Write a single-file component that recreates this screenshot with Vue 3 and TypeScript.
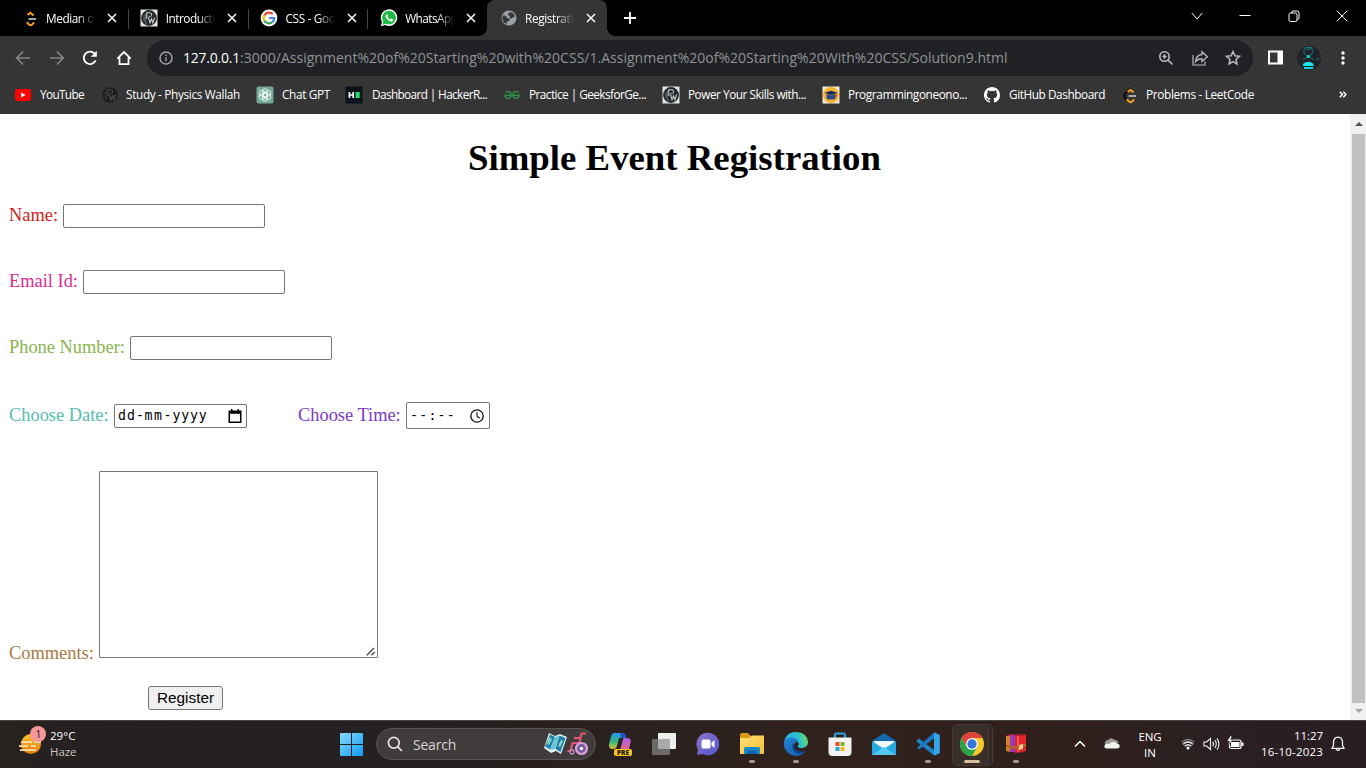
<script setup lang="ts">
import type { Directive } from 'vue'

interface Tab { title: string; width: number; icon: string; active?: boolean }
interface Bookmark { label: string; left: number; text: number; width: number; icon: string }
interface TaskItem { name: string; icon: string; state?: 'open' | 'active' }

// Sets the tracking so that a label takes up the given width.
const vFit: Directive<HTMLElement, number> = {
  mounted(el, { value }) {
    const n = (el.textContent || '').trim().length
    if (n) el.style.letterSpacing = `${(value - el.getBoundingClientRect().width) / n}px`
  },
}

const art: Record<string, string> = {
  leet: `<path d="M9.2 .6 2.900 7Q1.300 8.900 2.900 10.800L5 13" fill="none" stroke="#080808" stroke-width="2"/><path d="M5.600 5 8.300 2.800 11.600 5.600M4.800 12.300 7 14.500Q8.600 15.900 10.200 14.500L12 12.300" fill="none" stroke="#f5a11c" stroke-width="2"/><path d="M6.500 9h7.500" stroke="#b3b1ad" stroke-width="1.900"/>`,
  pw: `<rect x="-.5" y="-.5" width="17" height="17" fill="#e4e4e4"/><circle cx="8" cy="8" r="7.900" fill="#23282a"/><path d="M5.800 9V2.800h2.800q2.300.3 2 2.200-.4 1.800-3 1.700M7.500 7.500l1.500 5.300 1.600-4 1.300 4L13.600 7.500" fill="none" stroke="#c9cccd" stroke-width="1.100"/><path d="M3 5v6M4.300 3.500v9.500l2 1.200" fill="none" stroke="#7f8688" stroke-width=".8"/>`,
  pwdark: `<circle cx="8" cy="8" r="7.800" fill="#1d1e1f"/><path d="M5.800 9V2.800h2.800q2.300.3 2 2.200-.4 1.800-3 1.700M7.500 7.500l1.500 5.300 1.600-4 1.300 4L13.600 7.500" fill="none" stroke="#4a4b4c" stroke-width="1.100"/><path d="M3 5v6M4.300 3.500v9.500" stroke="#3b3c3d" stroke-width=".8"/>`,
  google: `<circle cx="8" cy="8" r="8.400" fill="#fff"/><g fill="none" stroke-width="2.200"><path d="M11.800 4.100A5.300 5.300 0 0 0 3.400 5.400" stroke="#ea4335"/><path d="M3.400 5.300a5.300 5.300 0 0 0 0 5.400" stroke="#fbbc05"/><path d="M3.400 10.600a5.300 5.300 0 0 0 8 1.500" stroke="#34a853"/><path d="M8.100 8h5.200a5.300 5.300 0 0 1-2 4.200" stroke="#4285f4"/></g>`,
  whatsapp: `<path d="M-.2 16.300 1 12A8.300 8.300 0 1 1 4.300 15z" fill="#fff"/><path d="m1.400 14.700.9-3.100A6.900 6.900 0 1 1 4.800 13.800z" fill="#1dba45"/><path d="M5.500 4.300q.7-.5 1.100.4l.5 1.300-.7 1q1 1.800 2.900 2.600l.9-1 1.900.9q.1 1.400-1.300 2-1.600.3-4.200-1.700Q4.300 7.600 4.600 6z" fill="#fff"/>`,
  globe: `<circle cx="8" cy="8" r="7.500" fill="#9aa0a6"/><path d="M2.600 5 5 6.200 6.500 8.200 8.800 9l-.6 2-2 .4-.7 2.600A7 7 0 0 1 1.500 7zM9 2l3.500 1.400L14 6.500l-2.200.7-1.300 1.600-2-.8.4-2-2-.7.8-2z" fill="#35363a"/>`,
  youtube: `<rect x="0" y="2" width="16" height="12" rx="2.600" fill="#f00"/><path d="M6.200 5.500v5L10.600 8z" fill="#fff"/>`,
  gpt: `<rect x="-.5" y="-.5" width="17" height="17" rx="2" fill="#75a99c"/><g fill="none" stroke="#e9f5f1" stroke-width=".9"><rect x="5.500" y="1.800" width="5" height="8" rx="2.500"/><rect x="5.500" y="1.800" width="5" height="8" rx="2.500" transform="rotate(60 8 8)"/><rect x="5.500" y="1.800" width="5" height="8" rx="2.500" transform="rotate(120 8 8)"/><rect x="5.500" y="1.800" width="5" height="8" rx="2.500" transform="rotate(180 8 8)"/><rect x="5.500" y="1.800" width="5" height="8" rx="2.500" transform="rotate(240 8 8)"/><rect x="5.500" y="1.800" width="5" height="8" rx="2.500" transform="rotate(300 8 8)"/></g>`,
  hacker: `<rect x="-.5" y="-.5" width="17" height="17" fill="#0b121c"/><path d="M3.400 5v6M7.200 5v6M3.400 8h4" stroke="#fff" stroke-width="1.700"/><rect x="9.500" y="5" width="4.200" height="6" fill="#1edb63"/>`,
  gfg: `<g fill="none" stroke="#2f8d46" stroke-width="1.500"><path d="M1.500 5.500Q3 4 5.200 4.600 7.300 5.600 7.100 8.200 6.700 11.300 3.900 11.500 1.400 11.200.9 8.300H16"/><path d="M14.500 5.500Q13 4 10.800 4.600 8.700 5.600 8.900 8.200 9.300 11.300 12.100 11.500 14.600 11.200 15.100 8.300"/></g>`,
  prog: `<rect x="-.5" y="-.5" width="17" height="17" fill="#f4ead8"/><circle cx="8" cy="8" r="8" fill="#f6b32f"/><path d="m1.500 5.800 6.500-2 6.500 2L8 8.200z" fill="#182a63"/><path d="M3.500 7 8 8.500 12.500 7v4.700q-4.500 1.700-9 0z" fill="#2d4688"/><path d="M13.500 6v4" stroke="#d45b2d"/>`,
  github: `<path fill="#fff" d="M8 0C3.580 0 0 3.580 0 8c0 3.540 2.290 6.530 5.470 7.590.4.070.55-.17.55-.38 0-.19-.01-.82-.01-1.490-2.010.37-2.530-.49-2.690-.94-.09-.23-.48-.94-.82-1.130-.28-.15-.68-.52-.01-.53.63-.01 1.080.58 1.230.82.72 1.210 1.870.87 2.330.66.07-.52.28-.87.51-1.070-1.780-.2-3.640-.89-3.640-3.950 0-.87.31-1.590.82-2.150-.08-.2-.36-1.020.08-2.120 0 0 .67-.21 2.200.82a7.600 7.600 0 0 1 4 0c1.530-1.040 2.200-.82 2.200-.82.44 1.100.16 1.920.08 2.120.51.56.82 1.270.82 2.150 0 3.070-1.870 3.750-3.650 3.950.29.25.54.73.54 1.480 0 1.070-.01 1.930-.01 2.200 0 .21.15.46.55.38A8 8 0 0 0 16 8c0-4.420-3.580-8-8-8"/>`,
  copilot: `<defs><linearGradient id="cpa" x1="0" y1="0" x2="0" y2="1"><stop stop-color="#2497ee"/><stop offset=".55" stop-color="#35b67c"/><stop offset="1" stop-color="#e6c22e"/></linearGradient><linearGradient id="cpb" x1="0" y1="0" x2="0" y2="1"><stop stop-color="#a65ee8"/><stop offset="1" stop-color="#f1677e"/></linearGradient></defs><path d="M6 1h8q2.500.2 1.600 3l-.8 2h-3.600L8.600 15Q8 17 5 17 0 17 1 12L3.300 3.700Q4 1 6 1" fill="url(#cpa)"/><path d="M12 1h3q2 0 2.700 2.300L18.500 6h-5.300z" fill="#2153cb"/><path d="M16 6h3.500q4 .5 3.200 4l-1.500 6.500Q20.500 19 17 19h-5l2.700-11Q15 6 16 6" fill="url(#cpb)"/><rect x="6" y="17" width="18" height="7" rx="2" fill="#f7c81a"/><text x="15" y="22.800" text-anchor="middle" font-family="Open Sans, sans-serif" font-size="6.500" font-weight="800" fill="#19150b">PRE</text>`,
  taskview: `<rect x="6" y="1" width="18" height="16" rx="1" fill="#eee"/><rect x="0" y="7" width="18" height="16" rx="1" fill="#777" fill-opacity=".85"/><path d="M6 7h12v10H6z" fill="#aaa"/>`,
  chat: `<defs><linearGradient id="cha" x1="0" y1="0" x2="1" y2="1"><stop stop-color="#8b72c8"/><stop offset="1" stop-color="#5258cf"/></linearGradient></defs><path d="M12 .8a11.200 11.200 0 1 1-5.200 21.100L1 23l1-5.500A11.200 11.200 0 0 1 12 .8" fill="url(#cha)"/><rect x="5.500" y="7.500" width="9" height="9" rx="1.500" fill="#fff"/><path d="m15.500 10.500 3-2.500v8l-3-2.500z" fill="#fff"/>`,
  folder: `<defs><linearGradient id="foa" x1="0" y1="0" x2="1" y2="1"><stop stop-color="#ffe27a"/><stop offset="1" stop-color="#f7bd2e"/></linearGradient></defs><path d="M0 3q0-2 2-2h6l3 3H24v5H0z" fill="#d79a11"/><path d="M0 6h9l3-2.500h12V22H0z" fill="url(#foa)"/><path d="M4 22v-5q0-2 2-2h12q2 0 2 2v5z" fill="#1888cf"/><path d="M7 18.500h10V22H7z" fill="#0b64a8"/>`,
  edge: `<defs><linearGradient id="eda" x1="0" y1=".5" x2="1" y2=".3"><stop stop-color="#2bb0ec"/><stop offset=".6" stop-color="#29bfd0"/><stop offset="1" stop-color="#6fe35e"/></linearGradient><linearGradient id="edb" x1="0" y1="0" x2="1" y2="1"><stop stop-color="#2483d6"/><stop offset="1" stop-color="#1358aa"/></linearGradient></defs><path d="M0 12Q1 0 12 0q11 .5 12 10 0 5-5.500 6-4 .2-5-1.500 2-2 .5-4.500Q8 4 0 12" fill="url(#eda)"/><path d="M0 11q2-6 8-5.500 5 .5 6.500 5-2-1-4 1-3 4 2 7.500 4 2 9 0Q18 24 12 24 2 23 0 14z" fill="url(#edb)"/><path d="M8.800 12q-1.500 7 5 9.500 4 .5 7.500-2.500-3.500 1-7-.5-4.500-2-3.300-6z" fill="#0c3f83"/>`,
  store: `<path d="M7 7V3q0-1.500 1.500-1.500h7Q17 1.500 17 3v4" fill="none" stroke="#2ba5dd" stroke-width="2.200"/><path d="M.5 5.500h23V20q0 4-4 4h-15q-4 0-4-4z" fill="#f2f2f1"/><path d="M7.500 10h4v4h-4z" fill="#f04f27"/><path d="M12.500 10h4v4h-4z" fill="#7db929"/><path d="M7.500 15h4v4h-4z" fill="#2aa5df"/><path d="M12.500 15h4v4h-4z" fill="#f7b916"/>`,
  mail: `<path d="M0 9 12 1l12 8v14H0z" fill="#1167ac"/><path d="M2 9h20v7H2z" fill="#eef7fb"/><path d="M0 9l12 8 12-8v14H0z" fill="#26a8e3"/><path d="m0 23 12-8 12 8z" fill="#56c7f0"/>`,
  vscode: `<path d="M.8 8.300 3 6.600 18 18v5.500L.6 9.500z" fill="#1b85cb"/><path d="M.8 15.900 18 .5V6.500L3 17.600z" fill="#1b78c0"/><path d="m18 .3 5.800 2.700v18.200L18 23.800z" fill="#35a5ed"/>`,
  chrome: `<circle cx="12" cy="12" r="12" fill="#f6c928"/><path d="M1.600 6A12 12 0 0 1 22.400 6H12L7 15z" fill="#dd4338"/><path d="M1.600 6A12 12 0 0 0 12 24l5.200-9H6.800z" fill="#2ba24c"/><circle cx="12" cy="12" r="6" fill="#fff"/><circle cx="12" cy="12" r="4.700" fill="#3375db"/>`,
  books: `<path d="m2 4 3-2h16v16l-3 3L2 19z" fill="#9d1d27"/><path d="M2 4h5v16l-5-1z" fill="#cf8424"/><path d="M6 3h5v17H6z" fill="#9c36bc"/><path d="m11 4.500 11-1.500v16l-11 2z" fill="#e3252d"/><path d="M14 4.500v15" stroke="#fa6b5c" stroke-width="1.500"/><path d="m2 12.500 9 2 11-3v2.500l-11 3-9-2z" fill="#b7631d"/><path d="m15 13 4-1v5l-4 1z" fill="#f0d08e"/>`,
}

const tabs: Tab[] = [
  { title: 'Median o', width: 48, icon: 'leet' },
  { title: 'Introducti', width: 49, icon: 'pw' },
  { title: 'CSS - Goo', width: 50, icon: 'google' },
  { title: 'WhatsApp', width: 52, icon: 'whatsapp' },
  { title: 'Registrati', width: 48, icon: 'globe', active: true },
]

const bookmarks: Bookmark[] = [
  { label: 'YouTube', left: 15, text: 40, width: 44, icon: 'youtube' },
  { label: 'Study - Physics Wallah', left: 102, text: 126, width: 114, icon: 'pwdark' },
  { label: 'Chat GPT', left: 257, text: 282, width: 48, icon: 'gpt' },
  { label: 'Dashboard | HackerR...', left: 346, text: 372, width: 115, icon: 'hacker' },
  { label: 'Practice | GeeksforGe...', left: 504, text: 529, width: 117, icon: 'gfg' },
  { label: 'Power Your Skills with...', left: 663, text: 688, width: 118, icon: 'pw' },
  { label: 'Programmingoneono...', left: 823, text: 848, width: 119, icon: 'prog' },
  { label: 'GitHub Dashboard', left: 984, text: 1009, width: 96, icon: 'github' },
  { label: 'Problems - LeetCode', left: 1122, text: 1146, width: 108, icon: 'leet' },
]
const gap = (i: number) => (i ? bookmarks[i].left - bookmarks[i - 1].text - bookmarks[i - 1].width : 15)

const tasks: TaskItem[] = [
  { name: 'Copilot', icon: 'copilot' },
  { name: 'Task view', icon: 'taskview' },
  { name: 'Chat', icon: 'chat' },
  { name: 'File Explorer', icon: 'folder', state: 'open' },
  { name: 'Edge', icon: 'edge', state: 'open' },
  { name: 'Store', icon: 'store' },
  { name: 'Mail', icon: 'mail' },
  { name: 'Code', icon: 'vscode', state: 'open' },
  { name: 'Chrome', icon: 'chrome', state: 'active' },
  { name: 'Library', icon: 'books', state: 'open' },
]
</script>

<template>
  <div class="screen">
    <header class="tabstrip">
      <div v-for="(t, i) in tabs" :key="i" class="tab" :class="{ active: t.active, last: i === 3 }">
        <svg class="fav" viewBox="0 0 16 16" v-html="art[t.icon]"></svg>
        <span class="title"><span v-fit="t.width">{{ t.title }}</span></span>
        <svg class="x" viewBox="0 0 10 10"><path d="m1 1 8 8M9 1 1 9" /></svg>
      </div>
      <svg class="plus" viewBox="0 0 14 14"><path d="M7 1v12M1 7h12" /></svg>
      <div class="winctl">
        <svg viewBox="0 0 12 12"><path d="m.8 3 5.200 6 5.200-6" /></svg>
        <svg viewBox="0 0 12 12"><path d="M.5 5.500h11" /></svg>
        <svg viewBox="0 0 12 12"><rect x="1" y="3" width="8" height="8.500" rx="1.500" /><path d="M3.500 2.800V2q.3-1 1.500-1h4q2 0 2 2v5q0 1.500-1.800 1.500" /></svg>
        <svg viewBox="0 0 12 12"><path d="m.7.700 10.600 10.600M11.300.7.7 11.300" /></svg>
      </div>
    </header>

    <div class="toolbar">
      <div class="nav">
        <svg class="dim" viewBox="0 0 16 16"><path d="M15 8H2M8 1.600 1.600 8 8 14.400" /></svg>
        <svg class="dim" viewBox="0 0 16 16"><path d="M1 8h13M8 1.600 14.400 8 8 14.400" /></svg>
        <svg viewBox="0 0 16 16"><path d="M13.600 10.500A6.200 6.200 0 1 1 12.600 3.700L14 5.200" stroke-width="1.800" /><path d="M14.800.8v6H8.800z" fill="#fff" stroke="none" /></svg>
        <svg viewBox="0 0 16 16"><path d="M1.300 8.700 8 2l6.700 6.700M3.500 7.500v6.700h9V7.500" stroke-width="1.800" /></svg>
      </div>
      <div class="address">
        <svg class="info" viewBox="0 0 14 14"><circle cx="7" cy="7" r="6" /><path d="M7 6.200v4M7 3.600v1.500" /></svg>
        <span class="url"><b v-fit="57">127.0.0.1</b><span v-fit="767.5">:3000/Assignment%20of%20Starting%20with%20CSS/1.Assignment%20of%20Starting%20With%20CSS/Solution9.html</span></span>
        <div class="actions">
          <svg viewBox="0 0 16 16"><circle cx="6.500" cy="6.500" r="4.700" /><path d="m10 10 4.500 4.500M6.500 4.300v4.400M4.300 6.500h4.400" /></svg>
          <svg viewBox="0 0 16 16"><path d="M1 5v10h12v-3.500" stroke-width="1.200" /><path d="M10 1.700 15.400 6.700 10 11.500V8.800Q6 8.500 3.500 11.700 4 5 10 4.500z" stroke-width="1.300" /></svg>
          <svg viewBox="0 0 16 16"><path d="m8 1.600 1.900 4.200 4.600.5-3.500 3.100 1 4.600L8 11.600 4 14l1-4.600L1.500 6.300l4.600-.5z" stroke-width="1.500" /></svg>
        </div>
      </div>
      <svg class="panel" viewBox="0 0 15 15"><path fill="#fff" fill-rule="evenodd" d="M0 .5h15v14H0zM2 2.500v10h7.500v-10z" /></svg>
      <svg class="avatar" viewBox="0 0 24 24"><circle cx="12" cy="12" r="12" fill="#202426" /><g fill="none" stroke="#147b82"><path d="M7 3h9M8 1.500h7" stroke-width="1.200" /><path d="M6.500 4q0 4.500 4 6.500M16 4q0 4.500-4 6.500M10.500 11q-3 1-4 3M12 11q3 1 4 3" /><path d="M19 13h3" /></g><path d="M6 20v-2q5.500-4.500 10.500 0v2z" fill="#18e6ef" /><path d="M7 21h9v2H7z" fill="#18cfd9" /><circle cx="11.300" cy="10.500" r="1.400" fill="#18e6ef" /></svg>
      <svg class="dots" viewBox="0 0 4 14"><g fill="#fff"><circle cx="2" cy="2" r="1.700" /><circle cx="2" cy="7" r="1.700" /><circle cx="2" cy="12" r="1.700" /></g></svg>
    </div>

    <nav class="bookmarks">
      <div v-for="(b, i) in bookmarks" :key="b.label" class="bm" :style="{ marginLeft: gap(i) + 'px', width: b.text - b.left + b.width + 'px' }">
        <svg class="fav" viewBox="0 0 16 16" v-html="art[b.icon]"></svg>
        <span v-fit="b.width">{{ b.label }}</span>
      </div>
      <svg class="more" viewBox="0 0 8 7"><path d="M.8.800 3.400 3.500.8 6.200M4.300.8 6.900 3.500 4.300 6.200" /></svg>
    </nav>

    <main class="view">
      <section class="page">
        <h1>Simple Event Registration</h1>
        <form @submit.prevent>
          <div class="row name"><label for="n">Name:</label><input id="n" type="text"></div>
          <div class="row email"><label for="e">Email Id:</label><input id="e" type="text"></div>
          <div class="row phone"><label for="p">Phone Number:</label><input id="p" type="text"></div>
          <div class="row when">
            <label class="date-l">Choose Date:</label>
            <div class="picker date">
              <span><i v-fit="18">dd</i><i v-fit="8.500">-</i><i v-fit="19">mm</i><i v-fit="9">-</i><i v-fit="35">yyyy</i></span>
              <svg viewBox="0 0 14 14"><path fill="#000" fill-rule="evenodd" d="M.5 1.500H3V0h1.400v1.500h5.200V0H11v1.500h2.500V14H.5zM2 4.700v7.800h10V4.700z" /></svg>
            </div>
            <label class="time-l">Choose Time:</label>
            <div class="picker time">
              <span v-fit="46">--:--</span>
              <svg viewBox="0 0 14 14"><circle cx="7" cy="7" r="6.200" fill="none" stroke="#111" stroke-width="1.300" /><path d="M7 3.200V7.300l2.800 1.900" fill="none" stroke="#111" stroke-width="1.100" /></svg>
            </div>
          </div>
          <div class="row comments">
            <label for="c">Comments:</label>
            <div class="area"><textarea id="c"></textarea><svg viewBox="0 0 10 9"><path d="M.8 8.300 8 1M5.300 8.300 8.700 5" /></svg></div>
          </div>
          <button type="submit">Register</button>
        </form>
      </section>
      <aside class="scroll">
        <svg viewBox="0 0 8 4"><path d="M0 4 4 0l4 4z" fill="#505050" /></svg>
        <div class="thumb"></div>
        <svg viewBox="0 0 8 4"><path d="M0 0h8L4 4z" fill="#a3a3a3" /></svg>
      </aside>
    </main>

    <footer class="taskbar">
      <div class="weather">
        <svg viewBox="0 0 28 30"><defs><linearGradient id="sun" x1="0" y1="0" x2="0" y2="1"><stop stop-color="#ffc52f" /><stop offset="1" stop-color="#e8780c" /></linearGradient></defs><circle cx="12" cy="18" r="10" fill="url(#sun)" /><path d="M2 16.200h11M15 16.200h7M0 20.200h9M12 20.200h5M1 24.200h16" stroke="#f8dfae" stroke-width="1.700" /><circle cx="19" cy="8" r="8" fill="#f69799" /><text x="19.500" y="12" text-anchor="middle" font-family="Open Sans, sans-serif" font-size="11" fill="#331515">1</text></svg>
        <div><span v-fit="25.500">29°C</span><span class="haze" v-fit="26.500">Haze</span></div>
      </div>
      <svg class="start" viewBox="0 0 23 23"><defs><linearGradient id="win" x1="0" y1="0" x2="1" y2="1"><stop stop-color="#86dcff" /><stop offset="1" stop-color="#0f9bf4" /></linearGradient></defs><path fill="url(#win)" d="M0 1q0-1 1-1h10v11H0zM12 0h10q1 0 1 1v10H12zM0 12h11v11H1q-1 0-1-1zM12 12h11v10q0 1-1 1H12z" /></svg>
      <div class="search">
        <svg class="lens" viewBox="0 0 16 16"><circle cx="6.800" cy="6.800" r="5.400" /><path d="m10.800 10.800 4.200 4.200" /></svg>
        <span v-fit="43">Search</span>
        <svg class="map" viewBox="0 0 46 24"><path d="m6 1 6 3 5-2 7 3-6 17-5-3-5 2-7-5z" fill="#e1f4f5" /><path d="m7 2.500 5 2.500-5 12.500-5-3z" fill="#247ca8" /><path d="m12 5 4.500-1.500L12 17l-5 1z" fill="#64c7d6" /><path d="m16.500 3.500 6 2.500-5 14-5-3z" fill="#257ca9" /><path d="m6 5 3 2-3 6-2-1zM18 8l2 1-3 6-2-1z" fill="#7cd6c3" /><path d="M43 1.500h-4.500L36.500 11h-7l-2 8h-3M31 6h7M36 11l6 2" fill="none" stroke="#e45471" stroke-width="2.200" /><circle cx="38.500" cy="16.500" r="5.500" fill="#775ca5" stroke="#d7a1d9" stroke-width="2.200" /><circle cx="38.500" cy="16.500" r="1.700" fill="#fff" /><circle cx="29" cy="20" r="2" fill="none" stroke="#c488ce" stroke-width="1.300" /></svg>
      </div>
      <div class="tasks">
        <div v-for="t in tasks" :key="t.name" class="task" :class="t.state">
          <svg viewBox="0 0 24 24" v-html="art[t.icon]"></svg>
        </div>
      </div>
      <div class="tray">
        <svg class="up" viewBox="0 0 12 8"><path d="m1 6.500 5-5 5 5" /></svg>
        <svg class="cloud" viewBox="0 0 16 12"><path d="M1 8Q0 3.500 4 3 7-.5 10.500 2.800 14 3 14.500 6L8 8z" fill="#9b9796" /><path d="M3 11.500Q-.5 11 .5 8.500 2 6 5 7q4-4 8-.5 3.500.5 2.500 3.700-.7 1.300-2.500 1.300z" fill="#f2f2f2" /></svg>
        <div class="lang"><span v-fit="23">ENG</span><span v-fit="12">IN</span></div>
        <svg class="wifi" viewBox="0 0 14 12"><g fill="none" stroke="#eee" stroke-width="1.300"><path d="M.6 4.300Q7-1.300 13.400 4.300" stroke="#777" /><path d="M2 6.300Q7 1.800 12 6.300M3.700 8.300Q7 5.300 10.300 8.300" /></g><circle cx="7" cy="10" r="1.500" fill="#fff" /></svg>
        <svg class="vol" viewBox="0 0 17 14"><path d="M1 5v4h2.500L7.500 12.500v-11L3.500 5zM9.700 4.800q1.700 2.200 0 4.400M11.800 3q3 4 0 8M13.900 1.300q4.200 5.700 0 11.400" /></svg>
        <svg class="bat" viewBox="0 0 17 14"><rect x="2.500" y="4" width="11.500" height="8.500" rx="2" fill="none" stroke="#fff" stroke-width="1.200" /><path d="M4 6h8.500v5H4zM14.500 6.500h2v3.500h-2z" fill="#fff" /><path d="M3.500-.2 0 5h2.500l-1 4L6 3.500H3.700L5 0z" fill="#fff" stroke="#2a2022" stroke-width=".5" /></svg>
        <div class="clock"><span v-fit="29">11:27</span><span v-fit="62">16-10-2023</span></div>
        <svg class="bell" viewBox="0 0 14 16"><path d="M7 1.200q4.300.3 4.500 4.800v3.500l1.500 2.800H1l1.500-2.800V6Q2.700 1.500 7 1.200M5 12.500q2 4 4 0" /></svg>
      </div>
    </footer>
  </div>
</template>

<style>
body { margin: 0; overflow: hidden; }
</style>

<style scoped>
.screen { width: 1366px; height: 768px; display: flex; flex-direction: column; overflow: hidden; font-family: "Open Sans", "Noto Sans", sans-serif; font-size: 11.8px; color: #fff; background: #fff; }
.screen * { box-sizing: border-box; }
svg { display: block; flex: none; overflow: visible; }
span { white-space: nowrap; }
.fav { width: 16px; height: 16px; }

.tabstrip { height: 36px; flex: none; background: #000; display: flex; padding-left: 8px; align-items: stretch; }
.tab { width: 119.75px; flex: none; display: flex; align-items: center; padding: 0 0 1px 13.5px; position: relative; }
.tab:not(.active):not(.last)::after { content: ""; position: absolute; right: -1px; top: 9px; width: 1px; height: 20px; background: #464646; }
.tab .title { width: 49px; margin-left: 8.5px; overflow: hidden; -webkit-mask-image: linear-gradient(90deg, #000 65%, transparent); mask-image: linear-gradient(90deg, #000 65%, transparent); }
.tab .title > span, .bm > span, .search > span { display: inline-block; }
.tab .x { width: 10px; height: 10px; margin-left: 12px; fill: none; stroke: #fff; stroke-width: 1.5; }
.tab.active { background: #353535; border-radius: 8px 8px 0 0; }
.tab.active::before, .tab.active::after { content: ""; position: absolute; bottom: 0; width: 8px; height: 8px; }
.tab.active::before { left: -8px; background: radial-gradient(circle at 0 0, transparent 7.5px, #353535 8px); }
.tab.active::after { right: -8px; background: radial-gradient(circle at 100% 0, transparent 7.5px, #353535 8px); }
.plus { width: 14px; height: 14px; margin: 11px 0 0 16px; stroke: #fff; stroke-width: 1.8; }
.winctl { margin-left: auto; display: flex; gap: 36.3px; padding: 10px 18px 0 0; }
.winctl svg { width: 12px; height: 12px; fill: none; stroke: #fff; stroke-width: 1; }

.toolbar { height: 42px; flex: none; background: #353535; display: flex; padding-top: 4px; }
.nav { width: 147px; height: 36px; display: flex; gap: 17.7px; align-items: center; padding-left: 15px; }
.nav svg { width: 16px; height: 16px; fill: none; stroke: #fff; stroke-width: 1.5; }
.nav .dim { stroke: #858585; }
.address { width: 1106px; height: 36px; border-radius: 18px; background: #202124; display: flex; align-items: center; padding: 0 12px; flex: none; }
.info { width: 14px; height: 14px; fill: none; stroke: #a0a2a5; stroke-width: 1.5; }
.url { margin-left: 10px; font-size: 14px; color: #919396; display: flex; line-height: 20px; }
.url b { font-weight: 400; color: #fff; }
.actions { display: flex; gap: 17.5px; margin-left: auto; }
.actions svg { width: 16px; height: 16px; fill: none; stroke: #b9bbbe; stroke-width: 1.6; }
.panel { width: 15px; height: 15px; margin: 10px 0 0 15px; }
.avatar { width: 24px; height: 24px; margin: 6px 0 0 14px; }
.dots { width: 4px; height: 14px; margin: 11px 0 0 20px; }

.bookmarks { height: 36px; flex: none; background: #353535; display: flex; align-items: center; padding-bottom: 3px; }
.bm { display: flex; justify-content: space-between; align-items: center; flex: none; height: 17px; }
.bm > span { line-height: 17px; margin-top: -1px; }
.more { width: 8px; height: 7px; margin-left: 85px; fill: none; stroke: #fff; stroke-width: 1.5; }

.view { flex: 1; display: flex; min-height: 0; }
.page { width: 1350px; background: #fff; color: #000; font-family: "Liberation Serif", "Times New Roman", serif; font-size: 18.4px; padding-left: 9px; }
h1 { font-size: 36.8px; line-height: 42px; height: 42px; margin: 23px 10px 25px 0; text-align: center; font-weight: 700; }
form { display: flex; flex-direction: column; align-items: flex-start; }
.row { display: flex; align-items: center; height: 24px; margin-bottom: 42px; line-height: 22px; }
.row label { white-space: nowrap; margin-top: -2px; }
.row input { width: 202px; height: 24px; border: 1px solid #767676; border-radius: 2px; padding: 1px 2px; background: #fff; outline: none; }
.name { color: #d01d18; } .name label { width: 54px; }
.email { color: #da2c90; } .email label { width: 74px; }
.phone { color: #86b44f; } .phone label { width: 121px; }
.when { height: 27px; margin-bottom: 42px; }
.row.when label { margin-top: -1px; }
.date-l { color: #55bcb0; width: 105px; }
.time-l { color: #7a3ac6; width: 108px; margin-left: 51px; }
.picker { border: 1px solid #767676; border-radius: 2px; display: flex; align-items: center; justify-content: space-between; color: #000; font-family: "Noto Sans", "Open Sans", sans-serif; font-family: "DejaVu Sans Mono", monospace; font-size: 13.2px; }
.picker i { font-style: normal; display: inline-block; }
.picker svg { width: 14px; height: 14px; }
.date { width: 133px; height: 24px; padding: 0 4px 0 3px; }
.time { width: 84px; height: 27px; padding: 0 5px 0 3px; }
.comments { height: 187px; align-items: flex-end; color: #ab7943; margin-bottom: 28px; }
.row.comments label { width: 90px; margin: 0 0 -6px; }
.area { position: relative; width: 279px; height: 187px; }
.area textarea { display: block; width: 100%; height: 100%; resize: none; border: 1px solid #767676; border-radius: 1px; background: #fff; outline: none; margin: 0; }
.area svg { position: absolute; right: 2px; bottom: 2px; width: 10px; height: 9px; stroke: #444; stroke-width: 1.3; }
button { width: 75px; height: 24px; margin-left: 139px; padding: 0; border: 1px solid #767676; border-radius: 3px; background: #efefef; color: #000; font-family: "Liberation Sans", Arial, sans-serif; font-size: 15.33px; line-height: 22px; }
.scroll { width: 16px; background: #f1f1f1; display: flex; flex-direction: column; align-items: center; padding: 8px 0 7px 1px; }
.scroll svg { width: 8px; height: 4px; }
.thumb { width: 13px; height: 569px; margin-top: 8px; margin-bottom: 6px; background: #c1c1c1; flex: none; }

.taskbar { height: 48px; flex: none; display: flex; border-top: 1px solid #474443; background: linear-gradient(90deg, #272220 0, #242022 22%, #29211f 45%, #30211c 58%, #30201b 76%, #2a2022 90%, #291f23 100%); }
.weather { width: 340px; padding: 5px 0 0 19px; display: flex; gap: 3px; }
.weather > svg { width: 28px; height: 30px; }
.weather div { display: flex; flex-direction: column; align-items: flex-start; line-height: 16px; padding-top: 2px; font-size: 11.5px; }
.haze { color: #c9c6c5; }
.start { width: 23px; height: 23px; margin-top: 12px; }
.search { width: 220px; height: 32px; border-radius: 16px; margin: 7px 0 0 13px; border: 1px solid #595452; background: #413c3c; display: flex; align-items: center; padding-left: 10px; font-size: 14px; color: #d7d5d4; }
.lens { width: 16px; height: 16px; margin-right: 10px; fill: none; stroke: #e6e4e3; stroke-width: 1.7; }
.map { width: 46px; height: 24px; margin-left: 87px; }
.tasks { display: flex; margin-left: 2px; }
.task { width: 44px; height: 47px; padding: 11px 10px 0; position: relative; }
.task svg { width: 24px; height: 24px; position: relative; }
.task.open::after, .task.active::after { content: ""; position: absolute; left: 19px; bottom: 5px; width: 6px; height: 3px; border-radius: 2px; background: #a19a97; }
.task.active::after { left: 14px; width: 16px; background: #d7bd9d; }
.task.active::before { content: ""; position: absolute; left: 2px; top: 3px; width: 35px; height: 40px; border-radius: 5px; background: #3a2e29; border: 1px solid #443935; box-shadow: 4px 0 0 -1px #332722, 4px 0 0 0 #463a35; }
.tray { display: flex; color: #fff; font-size: 11.5px; }
.up { width: 12px; height: 8px; margin: 19px 0 0 36px; fill: none; stroke: #fff; stroke-width: 1.5; }
.cloud { width: 16px; height: 12px; margin: 16px 0 0 18px; }
.lang { width: 26px; margin: 8px 0 0 17px; display: flex; flex-direction: column; align-items: center; line-height: 16px; }
.wifi { width: 14px; height: 12px; margin: 17px 0 0 18px; }
.vol { width: 17px; height: 14px; margin: 16px 0 0 8px; fill: none; stroke: #f1f1f1; stroke-width: 1.1; }
.bat { width: 17px; height: 14px; margin: 15px 0 0 7px; }
.clock { width: 64px; margin: 7px 0 0 15px; display: flex; flex-direction: column; align-items: flex-end; line-height: 16px; }
.bell { width: 14px; height: 16px; margin: 15px 0 0 8px; fill: none; stroke: #f3f3f3; stroke-width: 1.3; }
</style>
